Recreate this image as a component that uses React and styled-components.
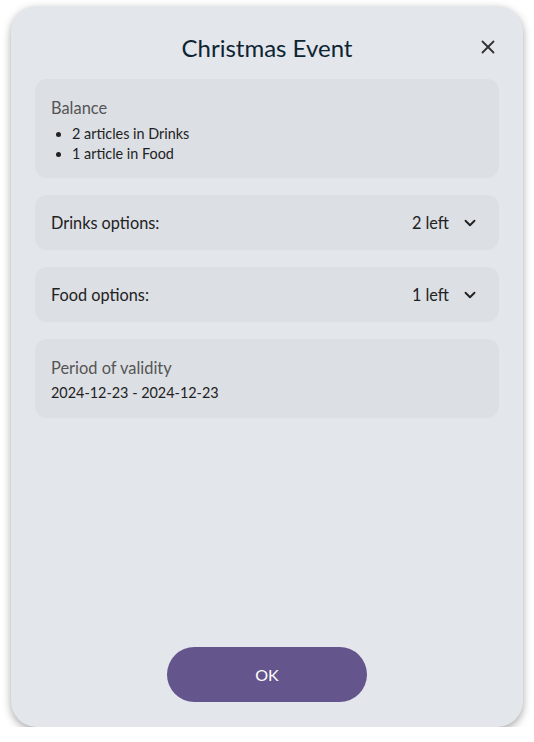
import styled, { createGlobalStyle } from "styled-components";
import { X, ChevronDown } from "lucide-react";

const GlobalStyle = createGlobalStyle`
   body {
      margin: 0;
      background: #ffffff;
      font-family: Lato, "Noto Sans", sans-serif;
   }
`;

const Page = styled.div`
   padding: 6px 11px 0;
`;

const Dialog = styled.div`
   width: 512px;
   height: 721px;
   box-sizing: border-box;
   background: #e3e6eb;
   border-radius: 26px;
   box-shadow: 0 3px 8px rgb(0 0 0 / 0.35);
   display: flex;
   flex-direction: column;
   padding: 24px 24px 25px;
`;

const Header = styled.div`
   position: relative;
   display: flex;
   justify-content: center;
   align-items: center;
   height: 34px;
   margin-bottom: 15px;

   h1 {
      margin: 0;
      font-size: 24px;
      font-weight: 400;
      color: #0d2433;
   }
`;

const CloseButton = styled.button`
   position: absolute;
   right: 0;
   top: 50%;
   transform: translateY(-50%);
   border: 0;
   background: none;
   padding: 0;
   display: flex;
   color: #333;
   cursor: pointer;
`;

const Cards = styled.div`
   display: flex;
   flex-direction: column;
   gap: 17px;
   flex-grow: 1;
`;

const Card = styled.div`
   background: #dcdfe4;
   border-radius: 12px;
   padding: 17px 16px 14px;
   color: #222;

   .label {
      font-size: 16.4px;
      line-height: 24px;
      color: #555;
   }
   ul {
      margin: 4px 0 0;
      padding-left: 21px;
      font-size: 14.4px;
      line-height: 20px;
      color: #222;
   }
   .date {
      margin: 3px 0 1px;
      font-size: 14.4px;
      line-height: 20px;
      color: #222;
   }
`;

const OptionRow = styled(Card)`
   display: flex;
   align-items: center;
   justify-content: space-between;
   height: 55px;
   box-sizing: border-box;
   padding: 0 20px 0 16px;
   font-size: 16.3px;
   cursor: pointer;

   .left {
      display: flex;
      align-items: center;
      gap: 12px;
   }
`;

const Footer = styled.div`
   display: flex;
   justify-content: center;
`;

const OkButton = styled.button`
   width: 200px;
   height: 55px;
   border: 0;
   border-radius: 28px;
   background: #64558c;
   color: #fff;
   font-family: Lato, sans-serif;
   font-size: 16px;
   cursor: pointer;
`;

const options = [
   { name: "Drinks options:", left: 2 },
   { name: "Food options:", left: 1 },
];

export default function App() {
   return (
      <Page>
         <GlobalStyle />
         <Dialog>
            <Header>
               <h1>Christmas Event</h1>
               <CloseButton>
                  <X size={22} strokeWidth={2} />
               </CloseButton>
            </Header>
            <Cards>
               <Card>
                  <div className="label">Balance</div>
                  <ul>
                     <li>2 articles in Drinks</li>
                     <li>1 article in Food</li>
                  </ul>
               </Card>
               {options.map((o) => (
                  <OptionRow key={o.name}>
                     <span>{o.name}</span>
                     <span className="left">
                        {o.left} left
                        <ChevronDown size={18} strokeWidth={2.5} />
                     </span>
                  </OptionRow>
               ))}
               <Card>
                  <div className="label">Period of validity</div>
                  <div className="date">2024-12-23 - 2024-12-23</div>
               </Card>
            </Cards>
            <Footer>
               <OkButton>OK</OkButton>
            </Footer>
         </Dialog>
      </Page>
   );
}
